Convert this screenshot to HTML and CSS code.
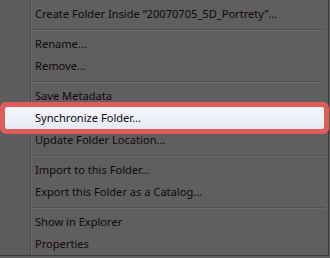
FILE: index.html
```html
<!DOCTYPE html>
<html lang="en">
<head>
  <meta charset="UTF-8" />
  <title>Folder menu</title>
  <link rel="stylesheet" href="styles.css">
</head>
<body>
  <div class="menu">
    <div class="item">Create Folder Inside “20070705_5D_Portrety”...</div>
    <div class="sep"></div>
    <div class="item">Rename...</div>
    <div class="item">Remove...</div>
    <div class="sep"></div>
    <div class="item">Save Metadata</div>
    <div class="item active">Synchronize Folder...</div>
    <div class="item">Update Folder Location...</div>
    <div class="sep"></div>
    <div class="item">Import to this Folder...</div>
    <div class="item">Export this Folder as a Catalog...</div>
    <div class="sep"></div>
    <div class="item">Show in Explorer</div>
    <div class="item">Properties</div>
  </div>
</body>
</html>
```

FILE: styles.css
```css
body {
  margin: 0;
  background-color: #5f5f5f;
  font-family: 'Noto Sans', 'Open Sans', sans-serif;
  font-size: 11.1px;
}
.menu {
  width: 328px;
  height: 252px;
  padding: 3px 0 0 0;
  border-right: 1px solid #3c3c3c;
  border-bottom: 1px solid #3c3c3c;
  background: linear-gradient(to right, #5d5d5d 0 30px, #4c4c4c 30px 31px, #6a6a6a 31px 32px, #5f5f5f 32px);
}
.item {
  height: 22px;
  line-height: 22px;
  padding-left: 35px;
  color: #120812;
  white-space: nowrap;
}
.item.active {
  margin: 0 4px 0 5px;
  padding-left: 30px;
  border-radius: 2px;
  background: linear-gradient(to bottom, #f4f5f9, #e4eaf5);
  box-shadow: 0 0 0 5px #e05c5c;
}
.sep {
  height: 8px;
  margin-left: 32px;
  margin-right: 3px;
  background: linear-gradient(to bottom, transparent 0 4px, #525252 4px 5px, #6a6a6a 5px 6px, transparent 6px);
}
```
